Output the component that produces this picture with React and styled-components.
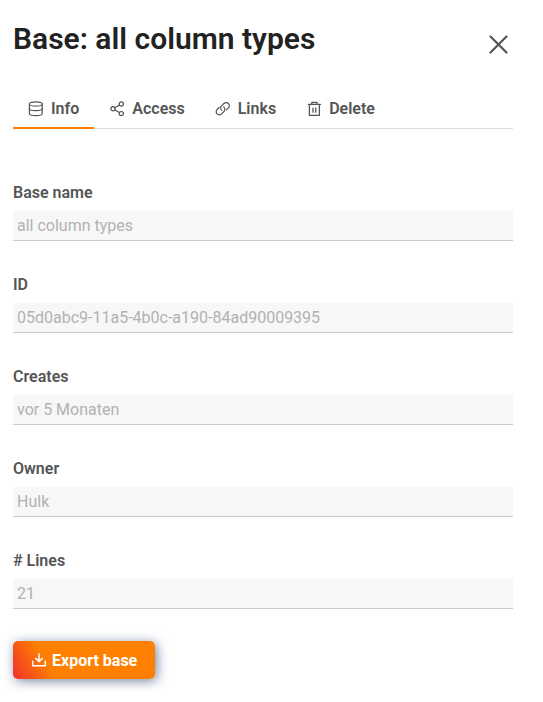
import React, { useState } from "react";
import styled, { createGlobalStyle } from "styled-components";

const GlobalStyle = createGlobalStyle`
  *, *::before, *::after { box-sizing: border-box; }
  body {
    margin: 0;
    background: #fff;
    color: #555;
    font-family: Roboto, "Liberation Sans", sans-serif;
    font-size: 16px;
    line-height: 20px;
  }
`;

const Panel = styled.main`
  padding: 20px 30px 20px 13px;
`;

const Header = styled.header`
  display: flex;
  align-items: flex-start;
  justify-content: space-between;
`;

const Title = styled.h1`
  margin: 0;
  color: #222;
  font-size: 30px;
  font-weight: 600;
  line-height: 38px;
`;

const CloseButton = styled.button`
  display: flex;
  margin-top: 10px;
  padding: 5px;
  border: 0;
  background: none;
  color: #555;
  cursor: pointer;
`;

const Tabs = styled.nav`
  display: flex;
  margin-top: 31px;
  border-bottom: 1px solid #ddd;
`;

const Tab = styled.button`
  display: flex;
  align-items: center;
  gap: 8px;
  height: 39px;
  margin-bottom: -1px;
  padding: 0 15px;
  border: 0;
  border-bottom: 2px solid ${(p) => (p.$active ? "#ff8000" : "transparent")};
  background: none;
  color: #555;
  font: inherit;
  font-weight: 600;
  cursor: pointer;
`;

const Form = styled.form`
  display: flex;
  flex-direction: column;
  align-items: stretch;
  gap: 32px;
  margin-top: 53px;
`;

const Fields = styled.div`
  display: flex;
  flex-direction: column;
  gap: 33px;
`;

const Field = styled.div`
  display: flex;
  flex-direction: column;
  gap: 7px;
`;

const Label = styled.label`
  font-weight: 600;
  line-height: 22px;
`;

const Input = styled.input`
  width: 100%;
  height: 30px;
  padding: 0 4px;
  border: 0;
  border-bottom: 1px solid #ccc;
  border-radius: 0;
  background: #f7f7f7;
  color: #b2b2b2;
  font: inherit;
`;

const ExportButton = styled.button`
  display: flex;
  align-items: center;
  align-self: flex-start;
  gap: 5px;
  height: 38px;
  padding: 2px 18px 0;
  border: 0;
  border-radius: 5px;
  background: linear-gradient(60deg, #f0302c 0%, #ff8000 27%);
  box-shadow: 2px 2px 12px rgba(30, 55, 100, 0.6);
  color: #fff;
  font: inherit;
  font-weight: 700;
  cursor: pointer;
`;

const Svg = styled.svg`
  flex: none;
  fill: none;
  stroke: currentColor;
  stroke-linecap: round;
  stroke-linejoin: round;
`;

const CloseIcon = () => (
  <Svg width="19" height="19" viewBox="0 0 19 19" strokeWidth="2.2" aria-hidden="true">
    <path d="M1.5 1.5l16 16M17.5 1.5l-16 16" />
  </Svg>
);

const DatabaseIcon = () => (
  <Svg width="15" height="16" viewBox="0 0 15 16" strokeWidth="1.2" aria-hidden="true">
    <ellipse cx="7.8" cy="2.9" rx="6.4" ry="2.1" />
    <path d="M1.4 2.9v9.6c0 1.2 2.9 2.1 6.4 2.1s6.4-.9 6.4-2.1V2.9" />
    <path d="M1.4 7.6c0 1.2 2.9 2.1 6.4 2.1s6.4-.9 6.4-2.1" />
  </Svg>
);

const ShareIcon = () => (
  <Svg width="15" height="16" viewBox="0 0 15 16" strokeWidth="1.2" aria-hidden="true">
    <circle cx="4" cy="7.8" r="2.1" />
    <circle cx="12.3" cy="3" r="2.1" />
    <circle cx="12.3" cy="12.6" r="2.1" />
    <path d="M5.9 6.8l4.5-2.7M5.9 8.9l4.5 2.6" />
  </Svg>
);

const LinkIcon = () => (
  <Svg width="15" height="16" viewBox="0 0 15 16" strokeWidth="1.2" aria-hidden="true">
    <path d="M6.8 9.4a3.1 3.1 0 0 1-.3-4.5l2.4-2.4a3.1 3.1 0 0 1 4.5 0 3.1 3.1 0 0 1 0 4.4l-2 2" />
    <path d="M8.7 6a3.1 3.1 0 0 1 .3 4.5l-2.4 2.4a3.1 3.1 0 0 1-4.5 0 3.1 3.1 0 0 1 0-4.4l2-2" />
  </Svg>
);

const TrashIcon = () => (
  <Svg width="15" height="16" viewBox="0 0 15 16" strokeWidth="1.3" aria-hidden="true">
    <path d="M2.4 3.4h12M5.8 3.2V1.4H11v1.8M3.4 3.6v10.7h10V3.6" />
    <path d="M7 7.2v4M9.8 7.2v4" />
  </Svg>
);

const DownloadIcon = () => (
  <Svg width="16" height="16" viewBox="0 0 16 16" strokeWidth="1.5" aria-hidden="true">
    <path d="M8 .9v7.6M4.7 5.4L8 8.6l3.3-3.2" />
    <path d="M1.7 8.2v4.6h12.6V8.2" />
  </Svg>
);

const tabs = [
  { name: "Info", Icon: DatabaseIcon },
  { name: "Access", Icon: ShareIcon },
  { name: "Links", Icon: LinkIcon },
  { name: "Delete", Icon: TrashIcon },
];

const fields = [
  { id: "base-name", label: "Base name", value: "all column types" },
  { id: "base-id", label: "ID", value: "05d0abc9-11a5-4b0c-a190-84ad90009395" },
  { id: "created", label: "Creates", value: "vor 5 Monaten" },
  { id: "owner", label: "Owner", value: "Hulk" },
  { id: "lines", label: "# Lines", value: "21" },
];

export default function App() {
  const [active, setActive] = useState("Info");
  return (
    <>
      <GlobalStyle />
      <Panel>
        <Header>
          <Title>Base: all column types</Title>
          <CloseButton type="button" aria-label="Close">
            <CloseIcon />
          </CloseButton>
        </Header>
        <Tabs role="tablist">
          {tabs.map(({ name, Icon }) => (
            <Tab
              key={name}
              type="button"
              role="tab"
              aria-selected={active === name}
              $active={active === name}
              onClick={() => setActive(name)}
            >
              <Icon />
              {name}
            </Tab>
          ))}
        </Tabs>
        <Form>
          <Fields>
            {fields.map(({ id, label, value }) => (
              <Field key={id}>
                <Label htmlFor={id}>{label}</Label>
                <Input id={id} value={value} disabled />
              </Field>
            ))}
          </Fields>
          <ExportButton type="button">
            <DownloadIcon />
            Export base
          </ExportButton>
        </Form>
      </Panel>
    </>
  );
}
